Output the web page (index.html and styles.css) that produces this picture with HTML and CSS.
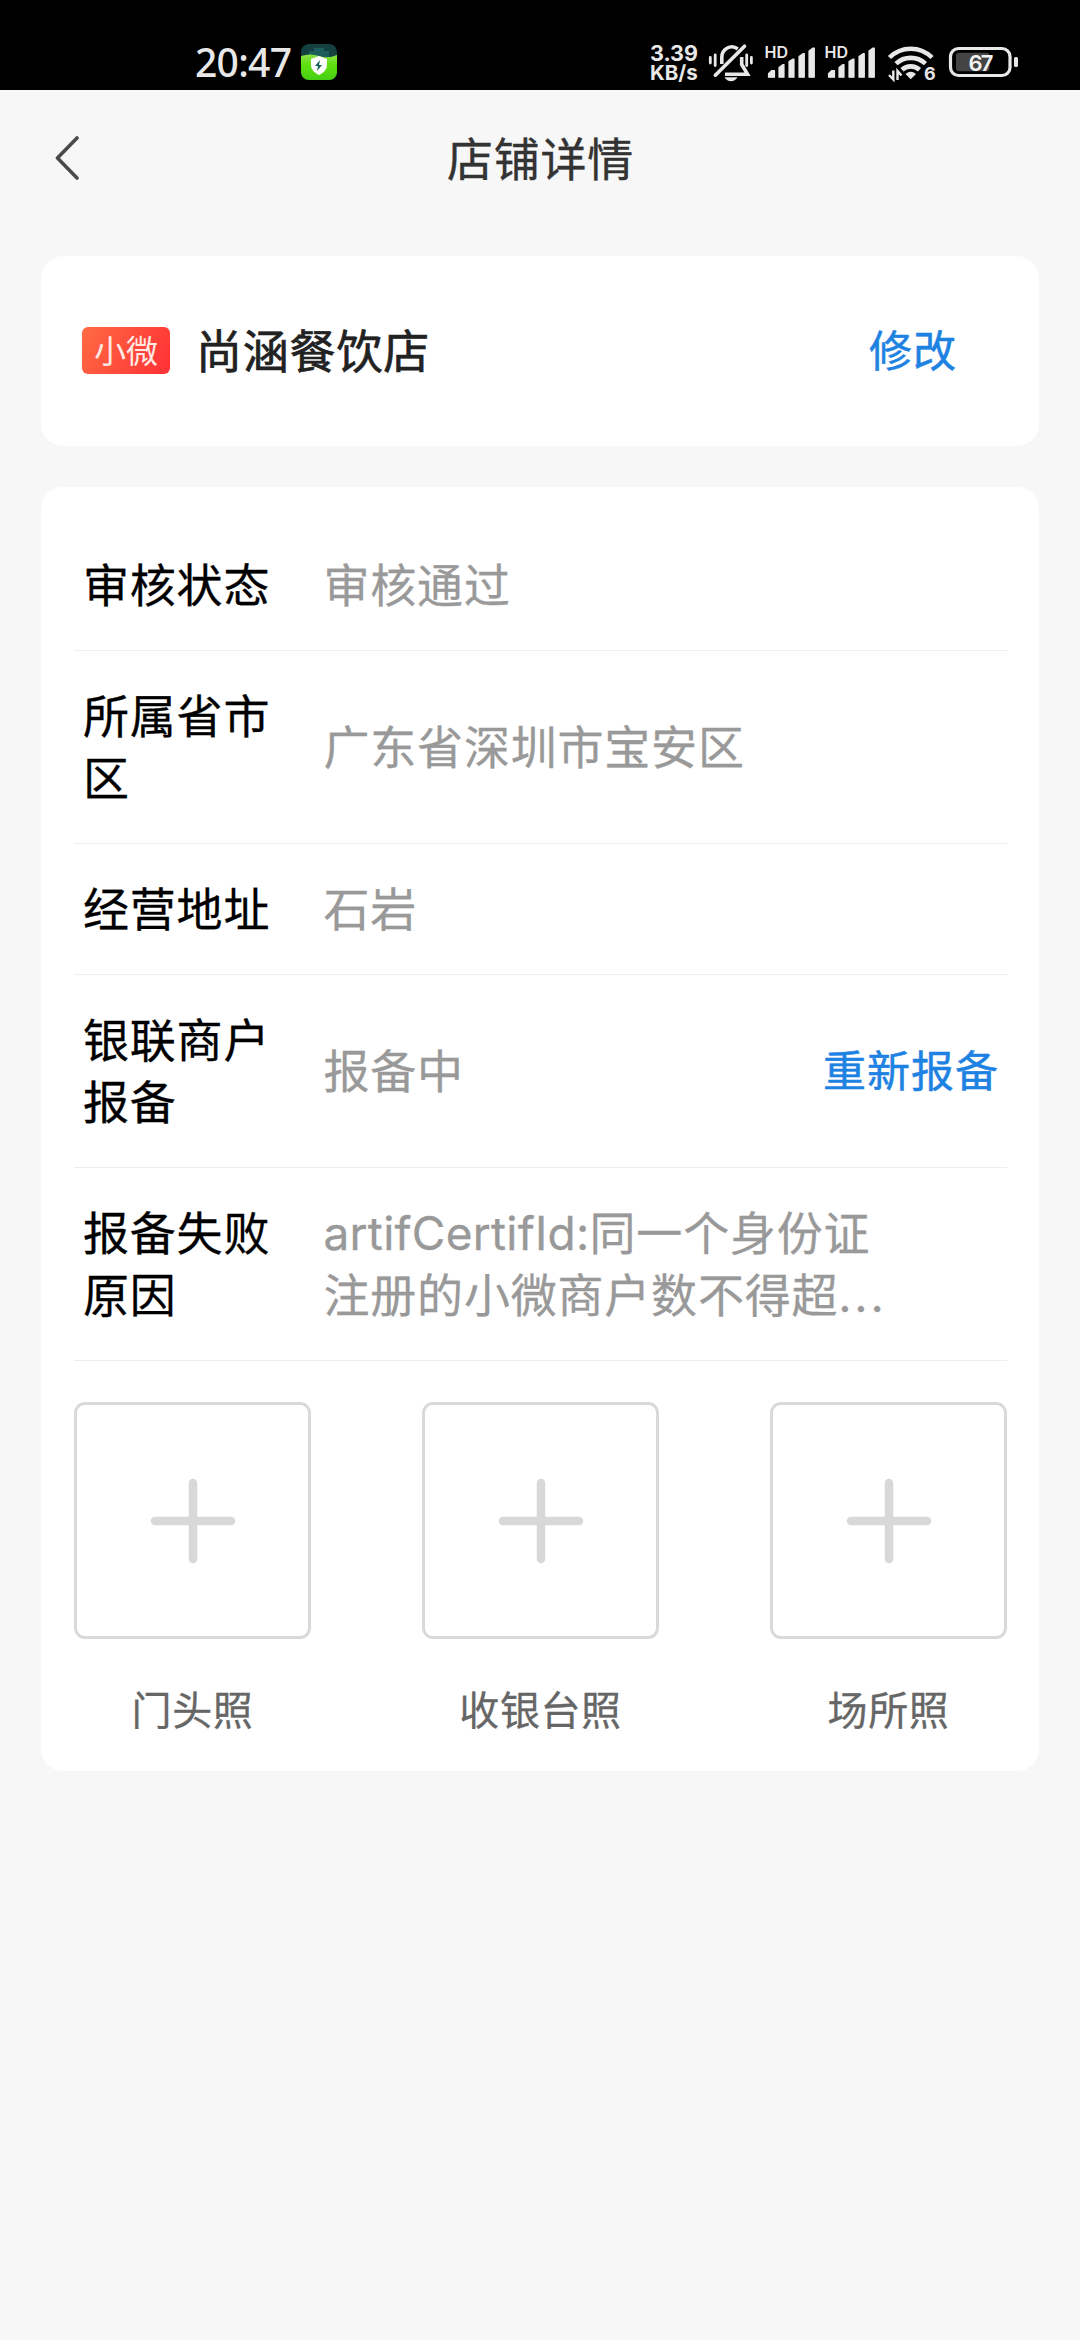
FILE: index.html
```html
<!DOCTYPE html>
<html lang="zh-CN">
<head>
<meta charset="utf-8">
<title>店铺详情</title>
<link rel="stylesheet" href="styles.css">
</head>
<body>
<header class="status">
  <span class="clock">20:47</span>
  <svg class="app" viewBox="0 0 36 36" width="36" height="36">
    <defs><linearGradient id="g" x1="0" y1="0" x2="0" y2="1"><stop offset="0" stop-color="#8be04a"/><stop offset=".4" stop-color="#5fe00e"/><stop offset="1" stop-color="#46cf14"/></linearGradient></defs>
    <rect width="36" height="36" rx="8" fill="#14403f"/>
    <path d="M8 7h5V4h10v3h5v6H8z" fill="#1d5e5c"/>
    <path d="M0 12q9-3 18 0t18-1v17a8 8 0 0 1-8 8H8a8 8 0 0 1-8-8z" fill="url(#g)"/>
    <path d="M18 12l8 3v6c0 5-4 8-8 10-4-2-8-5-8-10v-6z" fill="#fff"/>
    <path d="M19 16l-5 6h3l-1 5 5-6h-3z" fill="#17605a"/>
  </svg>
  <div class="speed"><span class="rate">3.39</span><span class="unit">KB/s</span></div>
  <svg class="bell" viewBox="707 40 48 44" width="48" height="44" fill="none" stroke="#e8e8e8" stroke-width="3.6">
    <path d="M721.8 64v-6.500a10 10.500 0 0 1 16-8.500M741.700 57v7.500l5.800 9.700H725"/>
    <path d="M715.300 75.200l29.200-29" stroke-linecap="round"/>
    <path d="M710.300 57.500v5.500M715.200 55v10.500M746.700 55v10.500M751.400 57.500v5.500" stroke-width="2.800" stroke-linecap="round"/>
    <path d="M724.500 77.300h13q-2.500 4-6.500 4t-6.500-4z" fill="#e8e8e8" stroke="none"/>
  </svg>
  <svg class="signal" viewBox="764 38 52 42" width="52" height="42" fill="#e8e8e8">
    <text x="764.500" y="58.200" class="hd">HD</text>
    <path id="bars" stroke="#e8e8e8" stroke-width="1.200" stroke-linejoin="round" d="M768.500 77.200v-3.500l3-3h3v6.500zM779 77.200V67.500l4-3h1v12.700zM789 77.200V61.500l4-2.500h1v18.200zM799 77.200V56.500l4-2.800h1.300v23.500zM809 77.200V51l4-3h1.300v29.200z"/>
  </svg>
  <svg class="signal" viewBox="764 38 52 42" width="52" height="42" fill="#e8e8e8">
    <text x="764.500" y="58.200" class="hd">HD</text>
    <use href="#bars"/>
  </svg>
  <svg class="wifi" viewBox="886 42 50 42" width="50" height="42" fill="none" stroke="#e8e8e8" stroke-width="4.600">
    <path d="M889.500 57.500a30 30 0 0 1 42.500 0M896 63.700a21.500 21.500 0 0 1 29.500 0M902 69.800a13 13 0 0 1 17.500 0"/>
    <path d="M905.500 74q5.200-4.500 10.500 0l-5.300 5.300z" fill="#e8e8e8" stroke="none"/>
    <path d="M893.300 70.500v9l-4.300-4.500M897.500 80v-9l4 4.500" stroke-width="2.400"/>
    <text x="924" y="80.300" class="six">6</text>
  </svg>
  <svg class="battery" viewBox="948 46 72 32" width="72" height="32">
    <rect x="950.500" y="48.500" width="59.500" height="27" rx="8" fill="none" stroke="#e8e8e8" stroke-width="3.200"/>
    <rect x="956" y="52.800" width="33.500" height="18.500" rx="3" fill="#444"/>
    <rect x="1014" y="57" width="4" height="10" rx="1.500" fill="#e8e8e8"/>
    <text x="968.500" y="70.800" class="pct" textLength="25">67</text>
  </svg>
</header>

<nav class="nav">
  <svg class="back" viewBox="0 0 26 44" width="26" height="44"><path d="M23 2L3.500 22 23 42" fill="none" stroke="#4a4a4a" stroke-width="3.600" stroke-linecap="round" stroke-linejoin="round"/></svg>
  <h1 class="title">店铺详情</h1>
</nav>

<main class="main">
  <section class="card shop">
    <span class="badge">小微</span>
    <span class="name">尚涵餐饮店</span>
    <a class="link edit">修改</a>
  </section>

  <section class="card detail">
    <div class="row"><span class="label">审核状态</span><span class="value">审核通过</span></div>
    <div class="row"><span class="label">所属省市区</span><span class="value">广东省深圳市宝安区</span></div>
    <div class="row"><span class="label">经营地址</span><span class="value">石岩</span></div>
    <div class="row"><span class="label">银联商户报备</span><span class="value">报备中</span><a class="link">重新报备</a></div>
    <div class="row"><span class="label">报备失败原因</span><span class="value"><span class="latin">artifCertifId:</span>同一个身份证<br>注册的小微商户数不得超<span class="dots">...</span></span></div>
    <div class="photos">
      <div class="photo"><div class="slot"><svg viewBox="0 0 86 86" width="86" height="86"><path class="plus" d="M43 5v76M5 43h76"/></svg></div><span class="caption">门头照</span></div>
      <div class="photo"><div class="slot"><svg viewBox="0 0 86 86" width="86" height="86"><path class="plus" d="M43 5v76M5 43h76"/></svg></div><span class="caption">收银台照</span></div>
      <div class="photo"><div class="slot"><svg viewBox="0 0 86 86" width="86" height="86"><path class="plus" d="M43 5v76M5 43h76"/></svg></div><span class="caption">场所照</span></div>
    </div>
  </section>
</main>
</body>
</html>
```
FILE: styles.css
```css
* { box-sizing: border-box; }
body {
  margin: 0;
  min-height: 2340px;
  background: #f7f7f7;
  font-family: "Noto Sans CJK SC", sans-serif;
  font-size: 46px;
  letter-spacing: 0.8px;
  line-height: 62px;
  color: #000;
}
svg { display: block; flex: none; }

.status {
  display: flex;
  align-items: flex-start;
  height: 90px;
  padding-left: 195px;
  background: #000;
  color: #e8e8e8;
  letter-spacing: 0;
}
.clock {
  width: 106px;
  padding-top: 42px;
  font: 500 39px/40px "Noto Sans", sans-serif;
  letter-spacing: -0.7px;
}
.app { margin-top: 44px; }
.speed {
  display: flex;
  flex-direction: column;
  width: 57px;
  margin: 44px 0 0 313px;
  font: 700 21.5px/19px Inter, sans-serif;
}
.unit { font-size: 20.5px; letter-spacing: 0; }
.bell { margin-top: 40px; }
.signal { margin: 38px 0 0 9px; }
.signal + .signal { margin-left: 8px; }
.wifi { margin: 42px 0 0 10px; }
.battery { margin: 46px 0 0 12px; }
.hd { font: 600 16px Inter, sans-serif; }
.six { font: 700 18px Inter, sans-serif; fill: #e8e8e8; stroke: none; }
.pct { font: 600 22px Inter, sans-serif; fill: #f2f2f2; }

.nav {
  display: grid;
  grid-template-columns: 54px 1fr 54px;
  align-items: center;
  height: 136px;
}
.back { grid-column: 2; grid-row: 1; }
.title {
  grid-column: 2;
  grid-row: 1;
  margin: 0;
  padding: 0 0 5px 1px;
  text-align: center;
  font-size: 46px;
  font-weight: 400;
  color: #333;
  -webkit-text-stroke: 0.4px #333;
}

.main { padding: 30px 41px 0; }
.card { border-radius: 22px; background: #fff; }
.shop {
  display: flex;
  align-items: center;
  height: 190px;
  margin-bottom: 41px;
  padding: 0 82px 0 41px;
}
.badge {
  width: 88px;
  height: 47px;
  margin-bottom: 1px;
  border-radius: 6px;
  background: linear-gradient(120deg, #ff6b42, #ff3035);
  color: #ffe9e4;
  font-size: 32px;
  letter-spacing: 0;
  line-height: 44px;
  text-align: center;
}
.name { margin-left: 26px; padding-bottom: 6px; color: #222; -webkit-text-stroke: 0.7px #222; }
.link { margin-left: auto; font-size: 43px; letter-spacing: 1px; color: #1e82e2; -webkit-text-stroke: 0.5px #1e82e2; }
.edit { padding-bottom: 6px; }

.detail { height: 1284px; padding: 33px 32px 0 33px; }
.row {
  display: flex;
  align-items: center;
  padding: 31px 9px 37px;
  border-bottom: 1px solid #eee;
}
.row .link { margin-right: -1px; }
.label { width: 200px; margin-right: 40.500px; -webkit-text-stroke: 0.3px #000; }
.value { color: #999; -webkit-text-stroke: 0.3px #999; white-space: nowrap; }
.latin { font-family: Inter, sans-serif; letter-spacing: 0.25px; line-height: 1; }
.dots { font-family: Inter, sans-serif; letter-spacing: 2.800px; line-height: 1; }

.photos { display: flex; justify-content: space-between; padding-top: 41px; }
.photo { display: flex; flex-direction: column; align-items: center; width: 237px; }
.slot {
  display: flex;
  align-items: center;
  justify-content: center;
  width: 237px;
  height: 237px;
  border: 3px solid #d9d9d9;
  border-radius: 11px;
}
.plus { fill: none; stroke: #d8d8d8; stroke-width: 8.500; stroke-linecap: round; }
.caption { margin-top: 38px; font-size: 40px; letter-spacing: 0.600px; color: #666; -webkit-text-stroke: 0.3px #666; }
```
